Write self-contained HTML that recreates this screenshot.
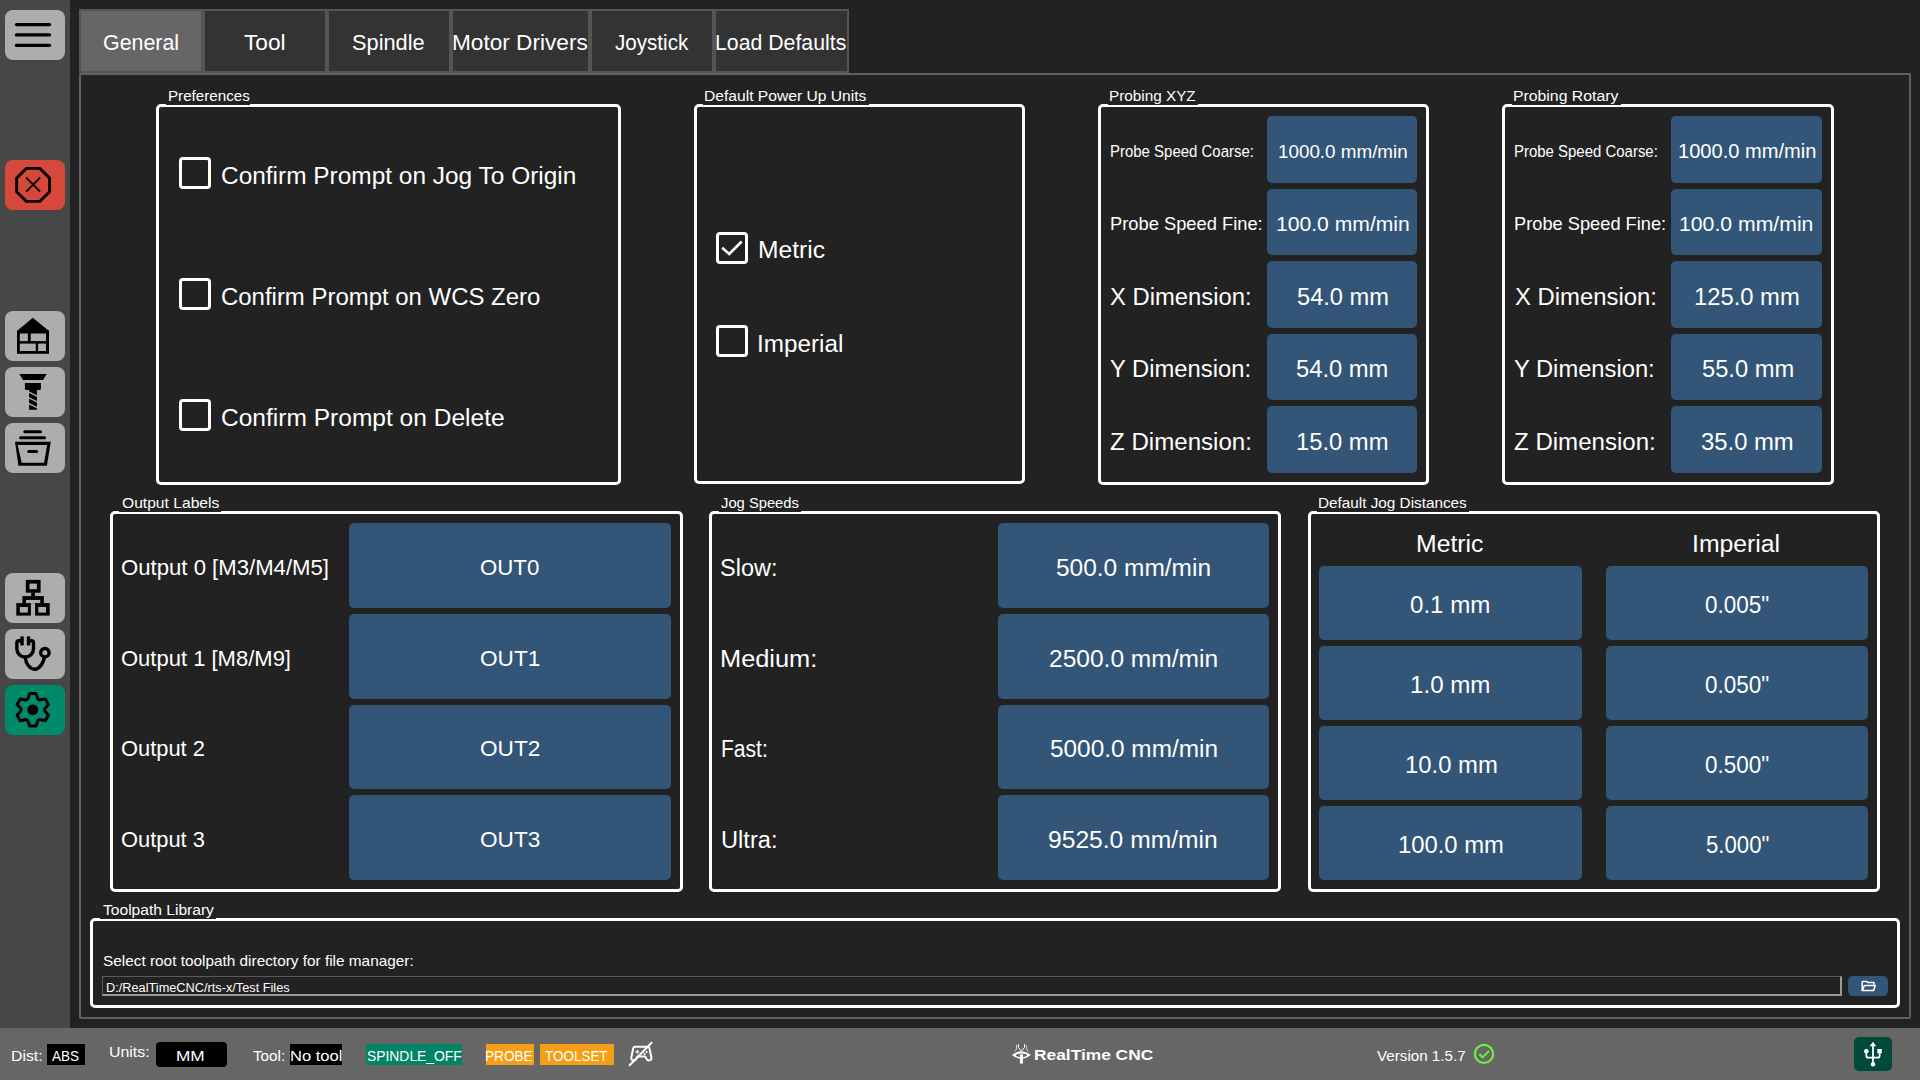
<!DOCTYPE html>
<html><head><meta charset="utf-8"><title>Settings</title>
<style>
html,body{margin:0;padding:0;}
body{width:1920px;height:1080px;overflow:hidden;background:#222222;position:relative;font-family:"Liberation Sans",sans-serif;color:#fff;}
.b{position:absolute;box-sizing:border-box;}
.t{position:absolute;white-space:nowrap;line-height:1;transform-origin:0 0;}
svg.ic{position:absolute;left:0;top:0;}
</style></head><body>
<div class="b" style="left:0px;top:0px;width:70px;height:1028px;background:#474747"></div>
<div class="b" style="left:0px;top:1028px;width:1920px;height:52px;background:#666666"></div>
<div class="b" style="left:79px;top:9px;width:770px;height:64px;background:#555555"></div>
<div class="b" style="left:81px;top:11px;width:120px;height:60px;background:#666666"></div>
<div class="b" style="left:205px;top:11px;width:120px;height:60px;background:#333333"></div>
<div class="b" style="left:329px;top:11px;width:120px;height:60px;background:#333333"></div>
<div class="b" style="left:453px;top:11px;width:135px;height:60px;background:#333333"></div>
<div class="b" style="left:592px;top:11px;width:120px;height:60px;background:#333333"></div>
<div class="b" style="left:716px;top:11px;width:131px;height:60px;background:#333333"></div>
<div class="b" style="left:79px;top:73px;width:1832px;height:946px;border:2px solid #606060;border-radius:2px;"></div>
<div class="b" style="left:156px;top:104px;width:465px;height:381px;border:3px solid #fff;border-radius:5px;"></div>
<div class="b" style="left:166px;top:87px;width:84px;height:18px;background:#222222"></div>
<div class="b" style="left:694px;top:104px;width:331px;height:380px;border:3px solid #fff;border-radius:5px;"></div>
<div class="b" style="left:703px;top:87px;width:166px;height:18px;background:#222222"></div>
<div class="b" style="left:1098px;top:104px;width:331px;height:381px;border:3px solid #fff;border-radius:5px;"></div>
<div class="b" style="left:1108px;top:87px;width:90px;height:18px;background:#222222"></div>
<div class="b" style="left:1502px;top:104px;width:332px;height:381px;border:3px solid #fff;border-radius:5px;"></div>
<div class="b" style="left:1512px;top:87px;width:109px;height:18px;background:#222222"></div>
<div class="b" style="left:110px;top:511px;width:573px;height:381px;border:3px solid #fff;border-radius:5px;"></div>
<div class="b" style="left:119px;top:494px;width:102px;height:18px;background:#222222"></div>
<div class="b" style="left:709px;top:511px;width:572px;height:381px;border:3px solid #fff;border-radius:5px;"></div>
<div class="b" style="left:719px;top:494px;width:82px;height:18px;background:#222222"></div>
<div class="b" style="left:1308px;top:511px;width:572px;height:381px;border:3px solid #fff;border-radius:5px;"></div>
<div class="b" style="left:1317px;top:494px;width:152px;height:18px;background:#222222"></div>
<div class="b" style="left:90px;top:918px;width:1810px;height:90px;border:3px solid #fff;border-radius:5px;"></div>
<div class="b" style="left:100px;top:901px;width:116px;height:18px;background:#222222"></div>
<div class="b" style="left:179px;top:157px;width:32px;height:32px;border:3px solid #fff;border-radius:4px;"></div>
<div class="b" style="left:179px;top:278px;width:32px;height:32px;border:3px solid #fff;border-radius:4px;"></div>
<div class="b" style="left:179px;top:399px;width:32px;height:32px;border:3px solid #fff;border-radius:4px;"></div>
<div class="b" style="left:716px;top:232px;width:32px;height:32px;border:3px solid #fff;border-radius:4px;"></div>
<div class="b" style="left:716px;top:325px;width:32px;height:32px;border:3px solid #fff;border-radius:4px;"></div>
<div class="b" style="left:1267px;top:116px;width:150px;height:67px;background:#335577;border-radius:5px;"></div>
<div class="b" style="left:1671px;top:116px;width:151px;height:67px;background:#335577;border-radius:5px;"></div>
<div class="b" style="left:1267px;top:189px;width:150px;height:66px;background:#335577;border-radius:5px;"></div>
<div class="b" style="left:1671px;top:189px;width:151px;height:66px;background:#335577;border-radius:5px;"></div>
<div class="b" style="left:1267px;top:261px;width:150px;height:67px;background:#335577;border-radius:5px;"></div>
<div class="b" style="left:1671px;top:261px;width:151px;height:67px;background:#335577;border-radius:5px;"></div>
<div class="b" style="left:1267px;top:334px;width:150px;height:66px;background:#335577;border-radius:5px;"></div>
<div class="b" style="left:1671px;top:334px;width:151px;height:66px;background:#335577;border-radius:5px;"></div>
<div class="b" style="left:1267px;top:406px;width:150px;height:67px;background:#335577;border-radius:5px;"></div>
<div class="b" style="left:1671px;top:406px;width:151px;height:67px;background:#335577;border-radius:5px;"></div>
<div class="b" style="left:349px;top:523px;width:322px;height:85px;background:#335577;border-radius:5px;"></div>
<div class="b" style="left:998px;top:523px;width:271px;height:85px;background:#335577;border-radius:5px;"></div>
<div class="b" style="left:349px;top:614px;width:322px;height:85px;background:#335577;border-radius:5px;"></div>
<div class="b" style="left:998px;top:614px;width:271px;height:85px;background:#335577;border-radius:5px;"></div>
<div class="b" style="left:349px;top:705px;width:322px;height:84px;background:#335577;border-radius:5px;"></div>
<div class="b" style="left:998px;top:705px;width:271px;height:84px;background:#335577;border-radius:5px;"></div>
<div class="b" style="left:349px;top:795px;width:322px;height:85px;background:#335577;border-radius:5px;"></div>
<div class="b" style="left:998px;top:795px;width:271px;height:85px;background:#335577;border-radius:5px;"></div>
<div class="b" style="left:1319px;top:566px;width:263px;height:74px;background:#335577;border-radius:5px;"></div>
<div class="b" style="left:1606px;top:566px;width:262px;height:74px;background:#335577;border-radius:5px;"></div>
<div class="b" style="left:1319px;top:646px;width:263px;height:74px;background:#335577;border-radius:5px;"></div>
<div class="b" style="left:1606px;top:646px;width:262px;height:74px;background:#335577;border-radius:5px;"></div>
<div class="b" style="left:1319px;top:726px;width:263px;height:74px;background:#335577;border-radius:5px;"></div>
<div class="b" style="left:1606px;top:726px;width:262px;height:74px;background:#335577;border-radius:5px;"></div>
<div class="b" style="left:1319px;top:806px;width:263px;height:74px;background:#335577;border-radius:5px;"></div>
<div class="b" style="left:1606px;top:806px;width:262px;height:74px;background:#335577;border-radius:5px;"></div>
<div class="b" style="left:102px;top:976px;width:1740px;height:20px;border-top:1px solid #5a5a5a;border-left:1px solid #5a5a5a;border-right:2px solid #9a9a9a;border-bottom:2px solid #9a9a9a;"></div>
<div class="b" style="left:1848px;top:976px;width:40px;height:20px;background:#335577;border-radius:5px;"></div>
<div class="b" style="left:47px;top:1044px;width:38px;height:21px;background:#000"></div>
<div class="b" style="left:156px;top:1042px;width:71px;height:25px;background:#000;border-radius:4px"></div>
<div class="b" style="left:290px;top:1044px;width:52px;height:21px;background:#000"></div>
<div class="b" style="left:366px;top:1044px;width:96px;height:21px;background:#008466"></div>
<div class="b" style="left:486px;top:1044px;width:48px;height:21px;background:#f49f16"></div>
<div class="b" style="left:540px;top:1044px;width:74px;height:21px;background:#f49f16"></div>
<div class="b" style="left:1854px;top:1037px;width:38px;height:34px;background:#004a3c;border-radius:5px"></div>
<div class="b" style="left:5px;top:10px;width:60px;height:50px;background:#adadad;border-radius:8px"></div>
<div class="b" style="left:5px;top:311px;width:60px;height:50px;background:#adadad;border-radius:8px"></div>
<div class="b" style="left:5px;top:367px;width:60px;height:50px;background:#adadad;border-radius:8px"></div>
<div class="b" style="left:5px;top:423px;width:60px;height:50px;background:#adadad;border-radius:8px"></div>
<div class="b" style="left:5px;top:573px;width:60px;height:50px;background:#adadad;border-radius:8px"></div>
<div class="b" style="left:5px;top:629px;width:60px;height:50px;background:#adadad;border-radius:8px"></div>
<div class="b" style="left:5px;top:160px;width:60px;height:50px;background:#d5483a;border-radius:8px"></div>
<div class="b" style="left:5px;top:685px;width:60px;height:50px;background:#00896a;border-radius:8px"></div>
<svg class="ic" width="1920" height="1080" viewBox="0 0 1920 1080">
<g stroke="#000" fill="none" stroke-linecap="round" stroke-width="3.3"><line x1="16.5" y1="24.6" x2="49.5" y2="24.6"/><line x1="16.5" y1="34.9" x2="49.5" y2="34.9"/><line x1="16.5" y1="45.3" x2="49.5" y2="45.3"/></g>
<polygon points="26.3,168.4 39.9,168.4 49.6,178.1 49.6,191.7 39.9,201.4 26.3,201.4 16.6,191.7 16.6,178.1" fill="none" stroke="#000" stroke-width="2.9"/>
<path d="M26.2,177.6 L40.1,191.6 M40.1,177.6 L26.2,191.6" stroke="#000" stroke-width="2"/>
<path d="M17,331 L32.8,317.7 L49,331 Z" fill="#000"/>
<rect x="17" y="330.5" width="32" height="23.3" fill="#000"/>
<rect x="19.8" y="333.5" width="8.1" height="7.6" fill="#adadad"/>
<rect x="30.7" y="333.5" width="15.3" height="7.6" fill="#adadad"/>
<rect x="19.8" y="343.6" width="16" height="7.4" fill="#adadad"/>
<rect x="38.1" y="343.6" width="7.9" height="7.4" fill="#adadad"/>
<path d="M19.4,373.9 L46.7,373.9 L43,380 L23,380 Z" fill="#000"/>
<path d="M24.9,383 H40.9 V388.4 Q40.9,389.9 39.4,389.9 H26.4 Q24.9,389.9 24.9,388.4 Z" fill="#000"/>
<rect x="29.1" y="389.5" width="7.8" height="20.3" fill="#000"/>
<g stroke="#adadad" stroke-width="1.5"><line x1="28" y1="391.6" x2="38" y2="396.6"/><line x1="28" y1="397.3" x2="38" y2="402.3"/><line x1="28" y1="403.2" x2="38" y2="408.2"/></g>
<g stroke="#000" stroke-width="3" stroke-linecap="round"><line x1="24.8" y1="431.7" x2="40.5" y2="431.7"/><line x1="20.6" y1="437.7" x2="44.5" y2="437.7"/><line x1="28.7" y1="451.4" x2="36.6" y2="451.4"/></g>
<path fill-rule="evenodd" fill="#000" d="M15,441.75 L50.8,441.75 L46.9,465.8 L18.4,465.8 Z M17.7,445 L47.1,445 L44.1,462.8 L21.7,462.8 Z"/>
<rect x="25.8" y="579.9" width="14.8" height="12.8" fill="#000"/>
<rect x="29.5" y="583.6" width="7.4" height="5.6" fill="#adadad"/>
<rect x="31.2" y="592.5" width="3.7" height="3.8" fill="#000"/>
<rect x="22.4" y="596.1" width="21.5" height="7.2" fill="#000"/>
<rect x="26" y="599.9" width="14.2" height="3.4" fill="#adadad"/>
<rect x="16.3" y="603.1" width="14.6" height="12.5" fill="#000"/>
<rect x="19.8" y="607" width="8.1" height="5.6" fill="#adadad"/>
<rect x="35.1" y="603.1" width="14.6" height="12.5" fill="#000"/>
<rect x="38.3" y="607" width="7.7" height="5.6" fill="#adadad"/>
<rect x="20.3" y="636.4" width="3.45" height="9" fill="#000"/><rect x="26.8" y="636.4" width="3.4" height="9" fill="#000"/>
<g fill="none" stroke="#000" stroke-width="3.4"><path d="M22,640.7 H19 Q16.85,640.7 16.85,643 V649 A8.33,8.33 0 0 0 33.5,649 V643 Q33.5,640.7 31.3,640.7 H28.5"/><path d="M25.2,657.6 C26,664 30,669.2 34.6,669.2 C40,669.2 43.5,662 44.6,656.8"/><circle cx="44.9" cy="652.7" r="4.2"/></g>
<path d="M27.77,699.01 L29.63,693.50 L35.97,693.50 L37.83,699.01 L39.63,700.05 L45.33,698.91 L48.50,704.40 L44.65,708.76 L44.65,710.84 L48.50,715.20 L45.33,720.69 L39.63,719.55 L37.83,720.59 L35.97,726.10 L29.63,726.10 L27.77,720.59 L25.97,719.55 L20.27,720.69 L17.10,715.20 L20.95,710.84 L20.95,708.76 L17.10,704.40 L20.27,698.91 L25.97,700.05 Z" fill="none" stroke="#000" stroke-width="3" stroke-linejoin="round"/>
<circle cx="32.8" cy="709.8" r="5.4" fill="#000"/>
<path d="M722.2,247.8 L729.2,254 L741.7,241.5" fill="none" stroke="#fff" stroke-width="2.6"/>
<g fill="none" stroke="#fff" stroke-width="1.5" stroke-linejoin="round"><path d="M1862.2,990.4 V982.3 Q1862.2,981.6 1862.9,981.6 H1866.9 L1867.6,982.4 H1874 V984.7"/><path d="M1864.4,985.6 H1875.3 L1873.6,990.4 H1862.2 Z"/></g>
<g transform="translate(620,1036)" fill="none" stroke="#fff" stroke-width="2" stroke-linecap="round" stroke-linejoin="round"><path d="M15,10.7 H27.6 Q29,10.7 29.4,12.2 L31.4,21.5 Q31.8,24.4 28.9,24.5 Q27.6,24.5 26.7,23.1 L25.2,20.5 H17.6 L16.1,23.1 Q15.2,24.5 13.8,24.5 Q10.9,24.4 11.3,21.5 L13.2,12.2 Q13.6,10.7 15,10.7 Z"/><line x1="9.6" y1="29.3" x2="31.6" y2="6.8"/></g>
<g fill="#fff"><rect x="635.6" y="1051.2" width="3.6" height="1.3"/><rect x="636.7" y="1050" width="1.3" height="3.6"/><circle cx="646.6" cy="1052" r="1"/><circle cx="644.6" cy="1054" r="1"/></g>
<g fill="#fff"><path d="M1011.9,1055 Q1021.5,1047.6 1031,1055 Q1021.5,1062.4 1011.9,1055 Z"/></g>
<ellipse cx="1021.5" cy="1055.3" rx="5.4" ry="1.8" fill="#666"/>
<rect x="1019.9" y="1054.4" width="3.1" height="9.2" fill="#fff"/>
<g fill="none" stroke="#fff" stroke-width="1"><path d="M1018.4,1044 V1047.5 L1021.4,1051"/><path d="M1024.5,1044 V1047.5 L1021.5,1051"/></g>
<g fill="none" stroke="#ddd" stroke-width="0.9"><path d="M1016.5,1045 V1049 L1014.5,1051.5"/><path d="M1026.4,1045 V1049 L1028.4,1051.5"/></g>
<circle cx="1484" cy="1053.9" r="9.1" fill="none" stroke="#6af246" stroke-width="2.2"/>
<path d="M1479.3,1054 L1482.5,1057.4 L1489,1050.9" fill="none" stroke="#6af246" stroke-width="2"/>
<g fill="none" stroke="#fff" stroke-width="1.8"><path d="M1873,1045 V1064"/><path d="M1866.3,1052 V1055.7 Q1866.3,1057.7 1868.3,1057.7 H1877.6 Q1879.6,1057.7 1879.6,1055.7 V1052"/></g>
<g fill="#fff"><path d="M1869.8,1046.2 L1873,1041.8 L1876.2,1046.2 Z"/><circle cx="1866.3" cy="1051.2" r="2.3"/><rect x="1877.3" y="1049" width="4.5" height="4.3"/><circle cx="1873" cy="1064.2" r="2.2"/></g>
</svg>
<div class="t" style="left:102.54px;top:32.00px;font-size:22.31px;transform:scaleX(0.9597);">General</div>
<div class="t" style="left:244.00px;top:32.00px;font-size:22.31px;transform:scaleX(1.0163);">Tool</div>
<div class="t" style="left:352.42px;top:32.00px;font-size:22.31px;transform:scaleX(0.9770);">Spindle</div>
<div class="t" style="left:451.99px;top:32.00px;font-size:22.31px;transform:scaleX(1.0147);">Motor Drivers</div>
<div class="t" style="left:615.00px;top:32.00px;font-size:22.31px;transform:scaleX(0.9234);">Joystick</div>
<div class="t" style="left:715.45px;top:32.00px;font-size:22.31px;transform:scaleX(0.9542);">Load Defaults</div>
<div class="t" style="left:167.59px;top:88.00px;font-size:15.04px;transform:scaleX(1.0097);">Preferences</div>
<div class="t" style="left:703.96px;top:88.00px;font-size:15.04px;transform:scaleX(1.0394);">Default Power Up Units</div>
<div class="t" style="left:1109.48px;top:88.00px;font-size:15.04px;transform:scaleX(1.0174);">Probing XYZ</div>
<div class="t" style="left:1512.95px;top:88.00px;font-size:15.04px;transform:scaleX(1.0507);">Probing Rotary</div>
<div class="t" style="left:122.00px;top:495.00px;font-size:15.04px;transform:scaleX(1.0395);">Output Labels</div>
<div class="t" style="left:721.00px;top:495.00px;font-size:15.04px;transform:scaleX(0.9813);">Jog Speeds</div>
<div class="t" style="left:1318.38px;top:495.00px;font-size:15.04px;transform:scaleX(1.0173);">Default Jog Distances</div>
<div class="t" style="left:102.50px;top:902.00px;font-size:15.04px;transform:scaleX(1.0369);">Toolpath Library</div>
<div class="t" style="left:220.65px;top:165.01px;font-size:23.28px;transform:scaleX(1.0501);">Confirm Prompt on Jog To Origin</div>
<div class="t" style="left:220.67px;top:286.01px;font-size:23.28px;transform:scaleX(1.0291);">Confirm Prompt on WCS Zero</div>
<div class="t" style="left:220.65px;top:407.01px;font-size:23.28px;transform:scaleX(1.0546);">Confirm Prompt on Delete</div>
<div class="t" style="left:758.34px;top:239.01px;font-size:23.28px;transform:scaleX(1.0574);">Metric</div>
<div class="t" style="left:757.31px;top:333.01px;font-size:23.28px;transform:scaleX(1.0430);">Imperial</div>
<div class="t" style="left:1109.59px;top:143.01px;font-size:16.49px;transform:scaleX(0.9079);">Probe Speed Coarse:</div>
<div class="t" style="left:1109.53px;top:215.00px;font-size:18.91px;transform:scaleX(0.9684);">Probe Speed Fine:</div>
<div class="t" style="left:1110.00px;top:286.01px;font-size:23.28px;transform:scaleX(1.0227);">X Dimension:</div>
<div class="t" style="left:1110.00px;top:358.01px;font-size:23.28px;transform:scaleX(1.0227);">Y Dimension:</div>
<div class="t" style="left:1110.00px;top:431.01px;font-size:23.28px;transform:scaleX(1.0355);">Z Dimension:</div>
<div class="t" style="left:1277.95px;top:144.00px;font-size:17.95px;transform:scaleX(1.0490);">1000.0 mm/min</div>
<div class="t" style="left:1275.56px;top:214.00px;font-size:20.37px;transform:scaleX(1.0374);">100.0 mm/min</div>
<div class="t" style="left:1296.50px;top:286.01px;font-size:23.28px;transform:scaleX(1.0154);">54.0 mm</div>
<div class="t" style="left:1296.00px;top:358.01px;font-size:23.28px;transform:scaleX(1.0210);">54.0 mm</div>
<div class="t" style="left:1295.98px;top:431.01px;font-size:23.28px;transform:scaleX(1.0213);">15.0 mm</div>
<div class="t" style="left:1513.69px;top:143.01px;font-size:16.49px;transform:scaleX(0.9073);">Probe Speed Coarse:</div>
<div class="t" style="left:1513.63px;top:215.00px;font-size:18.91px;transform:scaleX(0.9652);">Probe Speed Fine:</div>
<div class="t" style="left:1514.50px;top:286.01px;font-size:23.28px;transform:scaleX(1.0264);">X Dimension:</div>
<div class="t" style="left:1514.40px;top:358.01px;font-size:23.28px;transform:scaleX(1.0198);">Y Dimension:</div>
<div class="t" style="left:1514.40px;top:431.01px;font-size:23.28px;transform:scaleX(1.0340);">Z Dimension:</div>
<div class="t" style="left:1677.96px;top:142.01px;font-size:19.40px;transform:scaleX(1.0353);">1000.0 mm/min</div>
<div class="t" style="left:1678.96px;top:214.00px;font-size:20.37px;transform:scaleX(1.0421);">100.0 mm/min</div>
<div class="t" style="left:1693.68px;top:286.01px;font-size:23.28px;transform:scaleX(1.0221);">125.0 mm</div>
<div class="t" style="left:1701.50px;top:358.01px;font-size:23.28px;transform:scaleX(1.0188);">55.0 mm</div>
<div class="t" style="left:1701.00px;top:431.01px;font-size:23.28px;transform:scaleX(1.0244);">35.0 mm</div>
<div class="t" style="left:120.96px;top:558.01px;font-size:21.34px;transform:scaleX(1.0383);">Output 0 [M3/M4/M5]</div>
<div class="t" style="left:120.97px;top:649.01px;font-size:21.34px;transform:scaleX(1.0316);">Output 1 [M8/M9]</div>
<div class="t" style="left:120.97px;top:739.01px;font-size:21.34px;transform:scaleX(1.0256);">Output 2</div>
<div class="t" style="left:120.97px;top:830.01px;font-size:21.34px;transform:scaleX(1.0256);">Output 3</div>
<div class="t" style="left:479.56px;top:558.01px;font-size:21.34px;transform:scaleX(1.0425);">OUT0</div>
<div class="t" style="left:479.54px;top:649.01px;font-size:21.34px;transform:scaleX(1.0614);">OUT1</div>
<div class="t" style="left:479.54px;top:739.01px;font-size:21.34px;transform:scaleX(1.0614);">OUT2</div>
<div class="t" style="left:479.54px;top:830.01px;font-size:21.34px;transform:scaleX(1.0614);">OUT3</div>
<div class="t" style="left:719.99px;top:557.01px;font-size:23.28px;transform:scaleX(1.0105);">Slow:</div>
<div class="t" style="left:719.91px;top:648.01px;font-size:23.28px;transform:scaleX(1.0905);">Medium:</div>
<div class="t" style="left:721.09px;top:738.01px;font-size:23.28px;transform:scaleX(0.9056);">Fast:</div>
<div class="t" style="left:720.98px;top:829.01px;font-size:23.28px;transform:scaleX(1.0165);">Ultra:</div>
<div class="t" style="left:1056.00px;top:557.01px;font-size:23.28px;transform:scaleX(1.0515);">500.0 mm/min</div>
<div class="t" style="left:1048.95px;top:648.01px;font-size:23.28px;transform:scaleX(1.0543);">2500.0 mm/min</div>
<div class="t" style="left:1050.00px;top:738.01px;font-size:23.28px;transform:scaleX(1.0477);">5000.0 mm/min</div>
<div class="t" style="left:1048.34px;top:829.01px;font-size:23.28px;transform:scaleX(1.0581);">9525.0 mm/min</div>
<div class="t" style="left:1415.94px;top:533.01px;font-size:23.28px;transform:scaleX(1.0646);">Metric</div>
<div class="t" style="left:1691.87px;top:533.01px;font-size:23.28px;transform:scaleX(1.0650);">Imperial</div>
<div class="t" style="left:1410.00px;top:594.01px;font-size:23.28px;transform:scaleX(1.0369);">0.1 mm</div>
<div class="t" style="left:1704.70px;top:594.01px;font-size:23.28px;transform:scaleX(0.9672);">0.005&quot;</div>
<div class="t" style="left:1409.96px;top:674.01px;font-size:23.28px;transform:scaleX(1.0374);">1.0 mm</div>
<div class="t" style="left:1704.70px;top:674.01px;font-size:23.28px;transform:scaleX(0.9672);">0.050&quot;</div>
<div class="t" style="left:1404.57px;top:754.01px;font-size:23.28px;transform:scaleX(1.0258);">10.0 mm</div>
<div class="t" style="left:1704.70px;top:754.01px;font-size:23.28px;transform:scaleX(0.9672);">0.500&quot;</div>
<div class="t" style="left:1397.98px;top:834.01px;font-size:23.28px;transform:scaleX(1.0241);">100.0 mm</div>
<div class="t" style="left:1705.60px;top:834.01px;font-size:23.28px;transform:scaleX(0.9536);">5.000&quot;</div>
<div class="t" style="left:102.50px;top:953.00px;font-size:15.52px;transform:scaleX(0.9897);">Select root toolpath directory for file manager:</div>
<div class="t" style="left:105.53px;top:981.01px;font-size:13.09px;transform:scaleX(0.9745);">D:/RealTimeCNC/rts-x/Test Files</div>
<div class="t" style="left:10.55px;top:1048.00px;font-size:15.04px;transform:scaleX(1.0507);">Dist:</div>
<div class="t" style="left:52.30px;top:1048.00px;font-size:15.04px;transform:scaleX(0.8985);">ABS</div>
<div class="t" style="left:108.74px;top:1044.00px;font-size:15.04px;transform:scaleX(1.0567);">Units:</div>
<div class="t" style="left:176.35px;top:1048.00px;font-size:15.04px;transform:scaleX(1.1479);">MM</div>
<div class="t" style="left:253.00px;top:1048.00px;font-size:15.04px;transform:scaleX(1.0140);">Tool:</div>
<div class="t" style="left:289.60px;top:1048.00px;font-size:15.04px;transform:scaleX(1.1018);">No tool</div>
<div class="t" style="left:366.60px;top:1049.01px;font-size:14.55px;transform:scaleX(0.9534);">SPINDLE_OFF</div>
<div class="t" style="left:485.46px;top:1049.01px;font-size:14.55px;transform:scaleX(0.9358);">PROBE</div>
<div class="t" style="left:545.30px;top:1049.01px;font-size:14.55px;transform:scaleX(0.9255);">TOOLSET</div>
<div class="t" style="left:1033.65px;top:1047.00px;font-size:15.04px;transform:scaleX(1.1538);font-weight:700;">RealTime CNC</div>
<div class="t" style="left:1377.00px;top:1048.00px;font-size:15.52px;transform:scaleX(0.9784);">Version 1.5.7</div>
</body></html>
